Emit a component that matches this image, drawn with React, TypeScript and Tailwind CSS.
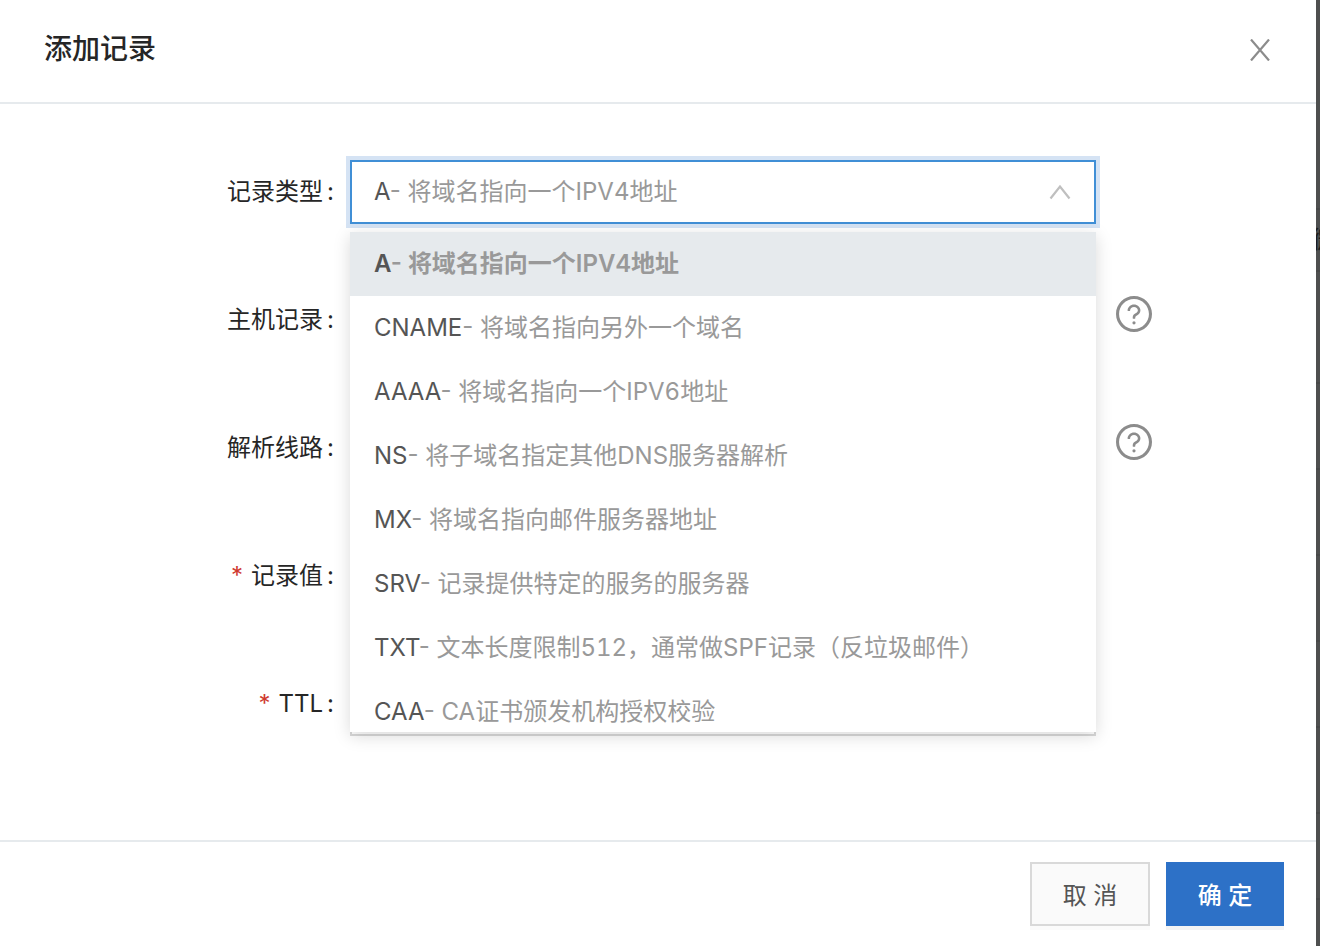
import { useState } from 'react';
import type { ReactNode } from 'react';

type RecordType = { code: string; note: string };

const RECORD_TYPES: RecordType[] = [
  { code: 'A', note: '将域名指向一个IPV4地址' },
  { code: 'CNAME', note: '将域名指向另外一个域名' },
  { code: 'AAAA', note: '将域名指向一个IPV6地址' },
  { code: 'NS', note: '将子域名指定其他DNS服务器解析' },
  { code: 'MX', note: '将域名指向邮件服务器地址' },
  { code: 'SRV', note: '记录提供特定的服务的服务器' },
  { code: 'TXT', note: '文本长度限制512，通常做SPF记录（反垃圾邮件）' },
  { code: 'CAA', note: 'CA证书颁发机构授权校验' },
];

const FIELD = 'h-16 w-full border-2 border-[#d9d9d9] bg-white px-[22px] text-[#595959]';

function HelpIcon() {
  return (
    <svg viewBox="64 64 896 896" className="size-9" fill="currentColor" aria-hidden="true">
      <path d="M512 64C264.600 64 64 264.600 64 512s200.600 448 448 448 448-200.600 448-448S759.400 64 512 64zm0 820c-205.400 0-372-166.600-372-372s166.600-372 372-372 372 166.600 372 372-166.600 372-372 372z" />
      <path d="M623.600 316.700C593.600 290.400 554 276 512 276s-81.600 14.500-111.600 40.700C369.200 344 352 380.700 352 420v7.600c0 4.400 3.600 8 8 8h48c4.400 0 8-3.600 8-8V420c0-44.100 43.100-80 96-80s96 35.900 96 80c0 31.100-22 59.600-56.100 72.700-21.200 8.100-39.200 22.300-52.100 40.900-13.100 19-19.900 41.800-19.900 64.900V620c0 4.400 3.600 8 8 8h48c4.400 0 8-3.600 8-8v-22.700a48.300 48.300 0 0 1 30.900-44.800c59-22.700 97.100-74.700 97.100-132.500.1-39.300-17.100-76-48.300-103.300zM472 732a40 40 0 1 0 80 0 40 40 0 1 0-80 0z" />
    </svg>
  );
}

function RecordTypeText({ type }: { type: RecordType }) {
  return (
    <span className="whitespace-nowrap text-[#999999]">
      <span className="text-[#555555]">{type.code}</span>- <span className="tabular-nums">{type.note}</span>
    </span>
  );
}

type RowProps = {
  id: string;
  label: string;
  required?: boolean;
  help?: string;
  children: ReactNode;
};

function Row({ id, label, required, help, children }: RowProps) {
  return (
    <div className="grid grid-cols-[350fr_746fr_220fr] items-center">
      <label htmlFor={id} className="flex justify-end pr-4 text-[#262626]">
        {required && <span className="mr-2 text-[#cf3a30]">*</span>}
        {label}
        <span className="ml-1">:</span>
      </label>
      {children}
      {help && (
        <button type="button" aria-label={help} className="mb-3 ml-5 justify-self-start text-[#8c8c8c]">
          <HelpIcon />
        </button>
      )}
    </div>
  );
}

export default function App() {
  const [open, setOpen] = useState(true);
  const [selected, setSelected] = useState(0);

  return (
    <div className='flex min-h-screen bg-[#4e4f4f] font-["Inter","Noto_Sans_CJK_SC",sans-serif] text-2xl leading-8'>
      <section role="dialog" aria-labelledby="title" className="flex min-w-0 flex-1 flex-col bg-white">
        <header className="flex h-26 items-stretch justify-between border-b-2 border-[#e6eaed] pl-11">
          <h1 id="title" className="self-center pb-1 text-[28px] leading-10 font-medium text-[#262626]">
            添加记录
          </h1>
          <button type="button" aria-label="关闭" className="flex w-28 items-center justify-center pb-0.5 text-[#8c8c8c]">
            <svg viewBox="0 0 20 22" className="h-[22px] w-5" fill="none" stroke="currentColor" strokeWidth="2.2" aria-hidden="true">
              <path d="M1 0.500 19 21.500M19 0.500 1 21.500" />
            </svg>
          </button>
        </header>

        <form id="record-form" className="flex flex-1 flex-col gap-16 py-14">
          <Row id="type" label="记录类型">
            <div className="relative">
              <button
                id="type"
                type="button"
                role="combobox"
                aria-expanded={open}
                aria-controls="type-options"
                onClick={() => setOpen(!open)}
                className="flex h-16 w-full items-center justify-between border-2 border-[#408fd6] bg-white px-[22px] ring-4 ring-[#d5e3f4]"
              >
                <RecordTypeText type={RECORD_TYPES[selected]} />
                <svg viewBox="0 0 24 16" className="h-4 w-6 text-[#bfbfbf]" fill="none" stroke="currentColor" strokeWidth="2.2" aria-hidden="true">
                  <path d="M2.500 14.500 12 2.500 21.500 14.500" />
                </svg>
              </button>
              {open && (
                <ul
                  id="type-options"
                  role="listbox"
                  className="absolute inset-x-0 top-full z-10 mt-2 h-[500px] overflow-hidden bg-white shadow-[0_4px_16px_rgba(0,0,0,0.15)]"
                >
                  {RECORD_TYPES.map((type, index) => (
                    <li
                      key={type.code}
                      role="option"
                      aria-selected={index === selected}
                      onClick={() => {
                        setSelected(index);
                        setOpen(false);
                      }}
                      className="flex h-16 cursor-pointer items-center px-6 aria-selected:bg-[#e6eaed] aria-selected:font-semibold"
                    >
                      <RecordTypeText type={type} />
                    </li>
                  ))}
                </ul>
              )}
            </div>
          </Row>
          <Row id="host" label="主机记录" help="主机记录说明">
            <input id="host" type="text" className={FIELD} />
          </Row>
          <Row id="line" label="解析线路" help="解析线路说明">
            <select id="line" className={FIELD} />
          </Row>
          <Row id="value" label="记录值" required>
            <input id="value" type="text" className={FIELD} />
          </Row>
          <Row id="ttl" label="TTL" required>
            <select id="ttl" className={FIELD} />
          </Row>
        </form>

        <footer className="flex justify-end gap-4 border-t-2 border-[#e6eaed] px-8 py-5">
          <button
            type="button"
            className="h-16 w-[120px] border-2 border-[#d9d9d9] bg-[#fafafa] pt-1 text-[#555555] shadow-[0_4px_0_rgba(0,0,0,0.016)]"
          >
            取 消
          </button>
          <button
            type="submit"
            form="record-form"
            className="h-16 w-[118px] bg-[#2d71c7] pt-1 font-medium text-white shadow-[0_4px_0_rgba(0,0,0,0.045)]"
          >
            确 定
          </button>
        </footer>
      </section>

      {/* Edge of the dimmed page behind the dialog */}
      <div aria-hidden="true" className="flex w-1 flex-col overflow-hidden pt-52 text-[#1c1c1c]">
        <div className="flex h-16 shrink-0 items-center border-y-2 border-[#474848] whitespace-nowrap">
          <span className="-ml-1">微</span>
        </div>
        <div className="h-28 border-b-2 border-[#474848]" />
        <div className="h-[86px] border-b-2 border-[#474848]" />
        <div className="h-[86px] border-b-2 border-[#474848]" />
        <div className="h-[86px] border-b-2 border-[#474848]" />
        <div className="h-[86px] border-b-2 border-[#474848]" />
        <div className="h-[86px] border-b-2 border-[#474848]" />
        <div className="h-[86px] border-b-2 border-[#474848]" />
      </div>
    </div>
  );
}
